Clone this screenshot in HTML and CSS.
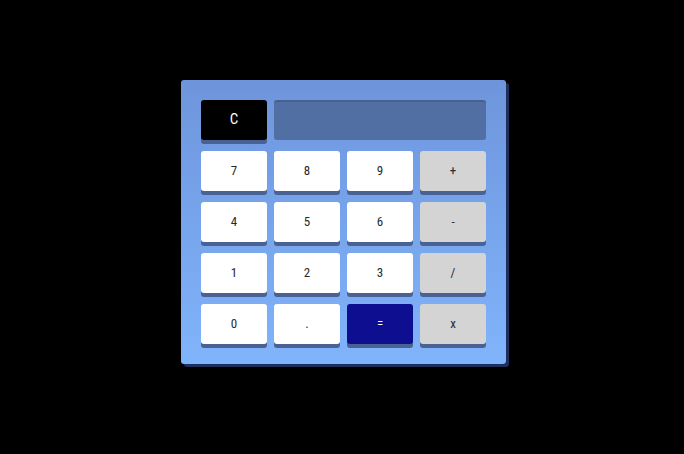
FILE: index.html
```html
<!DOCTYPE html>
<html>
<head>
<meta charset="utf-8">
<link rel="stylesheet" href="styles.css">
</head>
<body>
<div class="stage">
  <div class="calc">
    <div class="keys">
      <button class="key key-clear">C</button>
      <div class="display"></div>
      <button class="key">7</button>
      <button class="key">8</button>
      <button class="key">9</button>
      <button class="key key-op">+</button>
      <button class="key">4</button>
      <button class="key">5</button>
      <button class="key">6</button>
      <button class="key key-op">-</button>
      <button class="key">1</button>
      <button class="key">2</button>
      <button class="key">3</button>
      <button class="key key-op">/</button>
      <button class="key">0</button>
      <button class="key">.</button>
      <button class="key key-eq">=</button>
      <button class="key key-op">x</button>
    </div>
  </div>
</div>
</body>
</html>
```
FILE: styles.css
```css
html, body {
  margin: 0;
  padding: 0;
  background: #000;
  height: 100%;
}
.stage {
  display: flex;
  justify-content: center;
  padding-top: 80px;
  padding-left: 3px;
}
.calc {
  width: 325px;
  padding: 20px;
  box-sizing: border-box;
  background: linear-gradient(to bottom, #6e95dc, #80b4fb);
  border-radius: 3px;
  box-shadow: 3px 3px 0 #1f2f5c;
}
.keys {
  display: grid;
  grid-template-columns: repeat(4, 66px);
  grid-auto-rows: 40px;
  column-gap: 7px;
  row-gap: 11px;
}
.key {
  border: none;
  margin: 0;
  padding: 0 0 2px;
  border-radius: 3px;
  background: #fff;
  color: #2a2a2a;
  font-family: "Liberation Sans Narrow", "Roboto", sans-serif;
  font-stretch: condensed;
  font-size: 13px;
  box-shadow: 0 4px 0 #4a6293;
  cursor: pointer;
}
.key-op {
  background: #d4d4d4;
}
.key-eq {
  background: #0e0e90;
  color: #fff;
}
.key-clear {
  background: #000;
  color: #fff;
  font-size: 15px;
}
.display {
  grid-column: span 3;
  background: #516fa2;
  border-radius: 3px;
  border-top: 2px solid #47618f;
  box-sizing: border-box;
}
```
